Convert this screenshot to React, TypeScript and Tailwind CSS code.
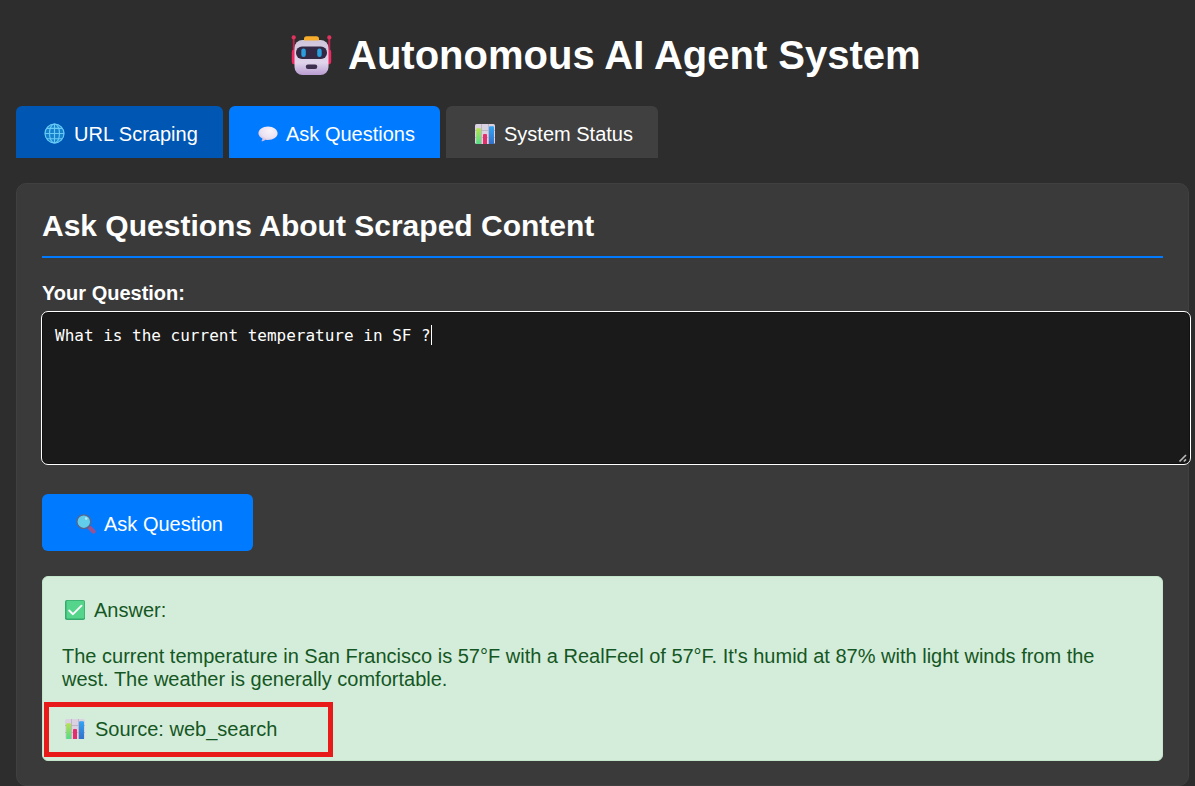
import { useId } from 'react';

function RobotIcon({ className }: { className?: string }) {
  const id = useId();
  return (
    <svg viewBox="0 0 40 40" className={className} aria-hidden="true">
      <defs>
        <linearGradient id={id} x1="0" y1="0" x2="0" y2="1">
          <stop offset="0" stopColor="#cfc5da" />
          <stop offset="0.65" stopColor="#e0d5ea" />
          <stop offset="1" stopColor="#b99cd2" />
        </linearGradient>
      </defs>
      <path d="M2.2 3V27M37.8 3V27" stroke="#c42350" strokeWidth="1.9" />
      <circle cx="2.2" cy="2.4" r="2.1" fill="#e2335f" />
      <circle cx="37.8" cy="2.4" r="2.1" fill="#e2335f" />
      <rect x="0.3" y="14.5" width="5.5" height="15" rx="2.4" fill="#ee2860" />
      <rect x="34.2" y="14.5" width="5.5" height="15" rx="2.4" fill="#ee2860" />
      <rect x="3" y="5" width="34" height="35" rx="8" fill={`url(#${id})`} />
      <path d="M12.5 5.600V3.800a2.500 2.500 0 0 1 2.500-2.500h10a2.500 2.500 0 0 1 2.500 2.500v1.800z" fill="#f7ad2b" />
      <rect x="4.500" y="11.500" width="31" height="12.500" rx="6" fill="#332944" />
      <rect x="9.800" y="13.500" width="4.500" height="8.500" rx="2.200" fill="#2a9ddd" />
      <rect x="25.700" y="13.500" width="4.500" height="8.500" rx="2.200" fill="#2a9ddd" />
      <rect x="14.300" y="29.500" width="11.500" height="4.500" rx="2.200" fill="#3d2f4d" />
    </svg>
  );
}

function GlobeIcon({ className }: { className?: string }) {
  return (
    <svg viewBox="0 0 21 21" className={className} aria-hidden="true">
      <circle cx="10.5" cy="10.5" r="9.9" fill="#1581cc" />
      <g fill="none" stroke="#68c9f5" strokeWidth="1.15">
        <circle cx="10.5" cy="10.5" r="9.5" />
        <ellipse cx="10.5" cy="10.5" rx="5" ry="9.5" />
        <path d="M10.5 1V20M1 10.5H20M2.7 5.3H18.3M2.7 15.7H18.3" />
      </g>
    </svg>
  );
}

function SpeechIcon({ className }: { className?: string }) {
  const id = useId();
  return (
    <svg viewBox="0 0 20 16" className={className} aria-hidden="true">
      <defs>
        <radialGradient id={id} cx="0.6" cy="0.3" r="0.75">
          <stop offset="0" stopColor="#f8f4fb" />
          <stop offset="0.65" stopColor="#ebe1f1" />
          <stop offset="1" stopColor="#c9b6dc" />
        </radialGradient>
      </defs>
      <path
        d="M10 0.4c5.4 0 9.6 3 9.6 6.8s-4.2 6.7-9.6 6.7c-.8 0-1.6 0-2.4-.2-1 .9-2.3 1.5-3.6 1.6-.5 0-.6-.4-.3-.8.5-.6.7-1.3.7-2C2 11.300.4 9.400.4 7.200.4 3.400 4.600.4 10 .4z"
        fill={`url(#${id})`}
      />
    </svg>
  );
}

function ChartIcon({ className }: { className?: string }) {
  const id = useId();
  return (
    <svg viewBox="0 0 20 20" className={className} aria-hidden="true">
      <defs>
        <linearGradient id={`${id}g`} x1="0" y1="0" x2="0" y2="1">
          <stop offset="0" stopColor="#b5e34e" />
          <stop offset="1" stopColor="#52dc86" />
        </linearGradient>
        <linearGradient id={`${id}b`} x1="0" y1="0" x2="0" y2="1">
          <stop offset="0" stopColor="#32a5f3" />
          <stop offset="1" stopColor="#3470c9" />
        </linearGradient>
      </defs>
      <rect width="20" height="20" rx="1.6" fill="#dbd2e1" />
      <path d="M6.500V20M13.500V20M0 6.500H20M0 13.500H20" stroke="#b8adc0" strokeWidth="0.8" />
      <path d="M6.500 0V20M13.500 0V20M0 6.500H20M0 13.500H20" stroke="#b8adc0" strokeWidth="0.8" />
      <path d="M1.200 20V5.200a1 1 0 0 1 1-1h2.800a1 1 0 0 1 1 1V20z" fill={`url(#${id}g)`} />
      <path d="M8 20v-9a1 1 0 0 1 1-1h2a1 1 0 0 1 1 1v9z" fill="#e52d6c" />
      <path d="M14 20V3.200a1 1 0 0 1 1-1h3a1 1 0 0 1 1 1V20z" fill={`url(#${id}b)`} />
    </svg>
  );
}

function SearchIcon({ className }: { className?: string }) {
  return (
    <svg viewBox="0 0 20 20" className={className} aria-hidden="true">
      <path d="M12.500 12.500L14.500 14.500" stroke="#58608c" strokeWidth="2" />
      <path d="M14 14L17.500 17.500" stroke="#9b5291" strokeWidth="4.200" strokeLinecap="round" />
      <circle cx="7.800" cy="7.700" r="6.900" fill="#62cdea" stroke="#57658f" strokeWidth="1.300" />
      <circle cx="10.200" cy="4.600" r="1.300" fill="#b4eafa" />
    </svg>
  );
}

function CheckIcon({ className }: { className?: string }) {
  return (
    <svg viewBox="0 0 20 20" className={className} aria-hidden="true">
      <rect width="20" height="20" rx="1.800" fill="#36aa6c" />
      <rect x="1.500" y="0.700" width="17.800" height="17.800" rx="1" fill="#55d58c" />
      <path d="M4.200 10.500L8 14.200L16.500 5.700" fill="none" stroke="#fbf7fc" strokeWidth="1.900" strokeLinecap="round" strokeLinejoin="round" />
    </svg>
  );
}

export default function App() {
  return (
    <div className="h-[786px] w-[1195px] overflow-hidden bg-[#2d2d2d] pl-4 pr-1.5 font-['Liberation_Sans',Arial,sans-serif] text-[20px] leading-[23px] text-white">
      <h1 className="flex h-[106px] items-start pl-[275px] pt-[32px] text-[40px] font-bold leading-[46px] whitespace-nowrap">
        <RobotIcon className="mr-[16px] mt-[3px] h-10 w-[41px] shrink-0" />
        Autonomous AI Agent System
      </h1>

      <nav className="flex gap-1.5">
        <button className="flex h-[52px] w-[207px] items-start rounded-t-[6px] bg-[#0056b3] pl-[28px] pt-[17px] whitespace-nowrap">
          <GlobeIcon className="mr-[9px] h-[21px] w-[21px] shrink-0" />
          URL Scraping
        </button>
        <button className="flex h-[52px] w-[211px] items-start rounded-t-[6px] bg-[#007bff] pl-[29px] pt-[17px] whitespace-nowrap">
          <SpeechIcon className="mr-2 mt-[3px] h-4 w-5 shrink-0" />
          Ask Questions
        </button>
        <button className="flex h-[52px] w-[212px] items-start rounded-t-[6px] bg-[#404040] pl-[29px] pt-[17px] whitespace-nowrap">
          <ChartIcon className="mr-[9px] mt-[1px] h-5 w-5 shrink-0" />
          System Status
        </button>
      </nav>

      <main className="mt-[25px] h-[603px] w-[1173px] rounded-[10px] border border-[#404040] bg-[#3a3a3a] px-[25px] pt-[24px]">
        <h2 className="h-[50px] border-b-2 border-[#007bff] text-[30px] font-bold leading-[36px]">
          Ask Questions About Scraped Content
        </h2>
        <label className="mt-[24px] block font-bold" htmlFor="question">
          Your Question:
        </label>
        <div className="-ml-px mt-[6px] flex h-[154px] w-[1150px] flex-col justify-between rounded-[7px] border border-white bg-[#1a1a1a] shadow-[inset_0_0_0_1px_#101010]">
          <div
            id="question"
            className="flex pl-[13px] pt-[13px] font-['DejaVu_Sans_Mono',monospace] text-[16px] leading-[22px] whitespace-pre"
          >
            What is the current temperature in SF ?<span className="h-[20px] w-px bg-white" />
          </div>
          <svg viewBox="0 0 10 10" className="mb-px mr-[2px] h-2.5 w-2.5 self-end" aria-hidden="true">
            <path d="M1.500 8.500L8 2M5.800 8.500L8 6.300" stroke="#b8b8b8" strokeWidth="1.700" />
          </svg>
        </div>

        <button className="mt-[29px] flex h-[57px] w-[211px] items-start rounded-[6px] bg-[#007bff] pl-[34px] pt-[19px] whitespace-nowrap">
          <SearchIcon className="mr-2 mt-[1px] h-5 w-5 shrink-0" />
          Ask Question
        </button>

        <section className="mt-[25px] h-[185px] rounded-[6px] border border-[#c3e6cb] bg-[#d4edda] pt-[22px] text-[#155724]">
          <div className="flex pl-[22px]">
            <CheckIcon className="mr-[9px] mt-[1px] h-5 w-5 shrink-0" />
            Answer:
          </div>
          <p className="mt-[23px] pl-[19px] whitespace-nowrap">
            The current temperature in San Francisco is 57°F with a RealFeel of 57°F. It's humid at 87% with light winds from the
            <br />
            west. The weather is generally comfortable.
          </p>
          <div className="ml-px mt-[11px] flex h-[55px] w-[289px] items-start border-[5px] border-[#e81a1a] pl-[16px] pt-[11px]">
            <ChartIcon className="mr-[10px] mt-[1px] h-5 w-5 shrink-0" />
            Source: web_search
          </div>
        </section>
      </main>
    </div>
  );
}
